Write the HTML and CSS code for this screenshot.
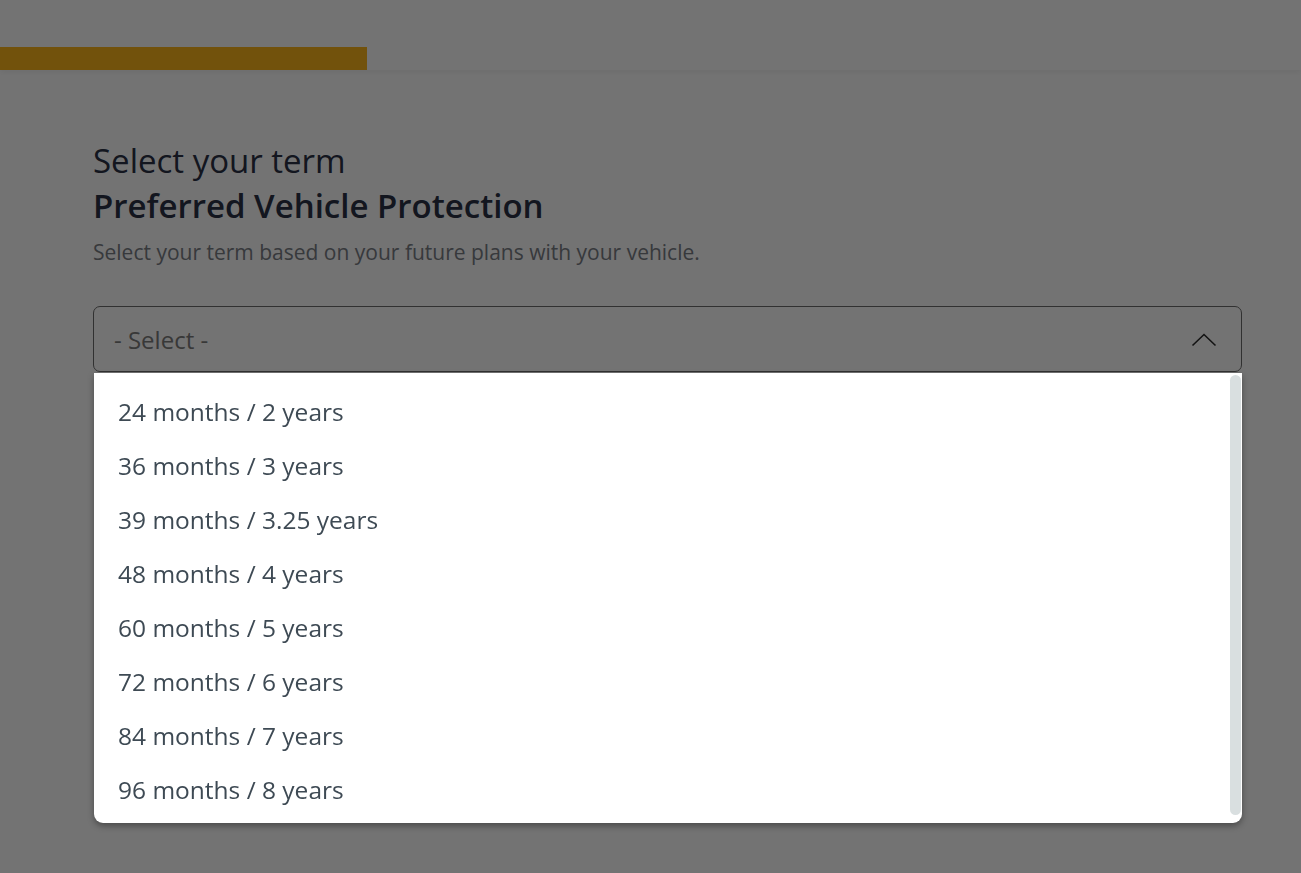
FILE: index.html
```html
<!DOCTYPE html>
<html lang="en">
<head>
  <meta charset="UTF-8" />
  <meta name="viewport" content="width=device-width, initial-scale=1.0" />
  <title>Select your term</title>
  <link rel="stylesheet" href="styles.css">
</head>
<body>
  <header class="top-bar">
    <div class="progress"><div class="progress-fill"></div></div>
  </header>

  <main class="page">
    <section class="term-card">
      <h2 class="eyebrow">Select your term</h2>
      <h1 class="title">Preferred Vehicle Protection</h1>
      <p class="lead">Select your term based on your future plans with your vehicle.</p>

      <div class="select-wrap">
        <button class="select-box" type="button">
          <span class="select-value">- Select -</span>
          <svg class="chevron" width="26" height="16" viewBox="0 0 26 16" fill="none">
            <path d="M1.5 14.5 L13 3.5 L24.5 14.5" stroke="#2a2a2a" stroke-width="1.6" />
          </svg>
        </button>
      </div>
    </section>
  </main>

  <div class="scrim"></div>

  <ul class="listbox" id="term-list">
    <li>24 months / 2 years</li>
    <li>36 months / 3 years</li>
    <li>39 months / 3.25 years</li>
    <li>48 months / 4 years</li>
    <li>60 months / 5 years</li>
    <li>72 months / 6 years</li>
    <li>84 months / 7 years</li>
    <li>96 months / 8 years</li>
  </ul>
</body>
</html>
```

FILE: styles.css
```css
body {
  margin: 0;
  font-family: "Open Sans", "Noto Sans", Arial, sans-serif;
  background: #ffffff;
  color: #2d3448;
  height: 873px;
  overflow: hidden;
}
.top-bar {
  height: 70px;
  background: #fff;
  box-shadow: 0 2px 6px rgba(0, 0, 0, 0.06);
  display: flex;
  flex-direction: column;
  justify-content: flex-end;
}
.progress {
  height: 23px;
  background: #fff;
}
.progress-fill {
  width: 367px;
  height: 100%;
  background: #fcb61c;
}
.page {
  padding: 72px 59px 0 93px;
}
.term-card {
  width: 1149px;
}
.eyebrow {
  margin: 0;
  font-size: 33px;
  font-weight: 400;
  line-height: 38px;
  color: #2a3146;
}
.title {
  margin: 6px 0 0;
  font-size: 33px;
  font-weight: 600;
  line-height: 40px;
  color: #2a3146;
}
.lead {
  margin: 14px 0 0;
  font-size: 21px;
  line-height: 24px;
  color: #7a7e86;
}
.select-wrap {
  margin-top: 42px;
}
.select-box {
  width: 100%;
  height: 66px;
  display: flex;
  align-items: center;
  justify-content: space-between;
  padding: 0 24px 0 20px;
  border: 1px solid #6e6e6e;
  border-radius: 7px;
  background: #fff;
  font-family: inherit;
  font-size: 24px;
  color: #7c7c7c;
  box-sizing: border-box;
}
.chevron {
  margin-top: -1px;
}
.scrim {
  position: fixed;
  inset: 0;
  background: rgba(0, 0, 0, 0.55);
}
.listbox {
  position: absolute;
  left: 94px;
  top: 373px;
  width: 1148px;
  margin: 0;
  padding: 12px 0 6px;
  list-style: none;
  background: #fff;
  border-radius: 0 0 9px 9px;
  box-shadow: 0 3px 6px rgba(0, 0, 0, 0.35);
  box-sizing: border-box;
}
.listbox::after {
  content: "";
  position: absolute;
  right: 1px;
  top: 2px;
  bottom: 8px;
  width: 11px;
  border-radius: 6px;
  background: #d9dfe0;
}
.listbox li {
  height: 54px;
  line-height: 54px;
  padding-left: 24px;
  font-size: 24.5px;
  color: #3e4a54;
}
```
